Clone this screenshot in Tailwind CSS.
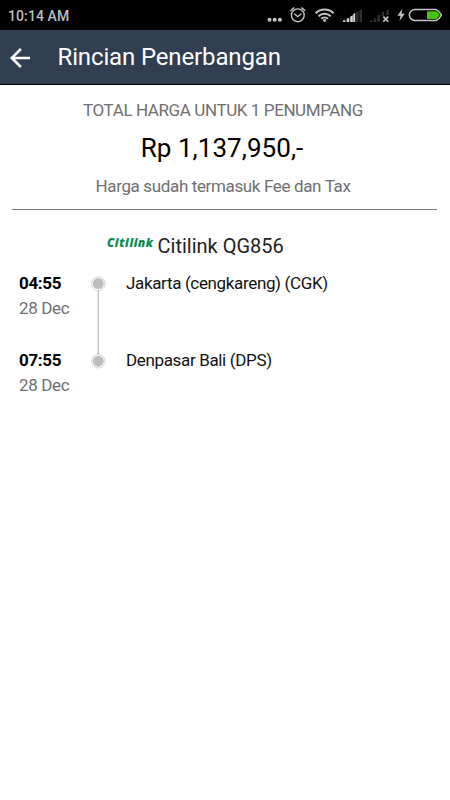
<!DOCTYPE html>
<html lang="id">
<head>
    <meta charset="utf-8"/>
    <meta name="viewport" content="width=device-width, initial-scale=1"/>
    <title>Rincian Penerbangan</title>
    <script src="https://cdn.jsdelivr.net/npm/@tailwindcss/browser@4"></script>
</head>
<body class="bg-white min-h-screen font-['Roboto',sans-serif] whitespace-nowrap">
    <!-- Status bar -->
    <div class="bg-black h-[30px] flex items-center justify-between pl-2 pr-2">
        <div class="text-[#bdbdbd] text-[14px] leading-[30px] font-medium pt-px tracking-[0.1px]">10:14 AM</div>
        <svg class="h-[30px] w-[177px]" viewBox="265 0 177 30" fill="none">
            <g fill="#c4c4c4">
                <circle cx="269.5" cy="19.7" r="2"/>
                <circle cx="274.7" cy="19.7" r="2"/>
                <circle cx="279.9" cy="19.7" r="2"/>
            </g>
            <g stroke="#c4c4c4" stroke-width="1.4" stroke-linecap="round">
                <circle cx="297.8" cy="15.3" r="6.4"/>
                <path d="M294.7 14l3 2.7 3.3-2.7M290.8 10.5l3-2.6M304.8 10.5l-3-2.6"/>
            </g>
            <g stroke="#c4c4c4" stroke-width="2">
                <path d="M315.6 13.2a12.8 12.8 0 0 1 18 0M318.5 16.2a8.6 8.6 0 0 1 12.2 0M321.2 18.8a4.9 4.9 0 0 1 6.8 0"/>
            </g>
            <circle cx="324.6" cy="20.3" r="1.5" fill="#c4c4c4"/>
            <path d="M343 22v-1.5l2.3-.6V22zM346.7 22v-3.3l2.6-1V22zM350.2 22v-5.4l2.6-1.3V22zM353.2 22v-8l2-1V22z" fill="#d4d4d4"/>
            <path d="M356.2 22v-9.8l2.3-1.2V22zM359.5 22V10.5l2.5-1.6V22z" fill="#303030"/>
            <path d="M370 22v-1.5l2.3-.6V22zM373.7 22v-3.3l2.6-1V22zM377.4 22v-6.2l2.5-1.6V22zM381.6 16v-3.4l2.5-1.3V16zM386.3 15v-4.2l2.5-1.6V15z" fill="#303030"/>
            <path d="M383.3 16.6l5 5.2M388.3 16.6l-5 5.2" stroke="#c4c4c4" stroke-width="1.6"/>
            <path d="M402.4 8.8l-5 6.9h3.2l-1.2 5.4 5.4-7.4h-3.4z" fill="#c4c4c4"/>
            <path d="M414.8 9.6h21.4q3.2 1.4 5.2 5.4q-2 4-5.2 5.5h-21.4a5.4 5.4 0 0 1 0-10.9z" stroke="#c4c4c4" stroke-width="1.5" stroke-linejoin="round"/>
            <path d="M427 11.2h9.3q2.3 1.4 3.4 3.8q-1.1 2.6-3.4 3.9H427z" fill="#47c10b"/>
        </svg>
    </div>

    <!-- App bar -->
    <div class="bg-[#2f3e50] h-[55px] border-b border-black flex items-center">
        <svg class="ml-[10px] mt-px w-5 h-5" viewBox="0 0 20 20" fill="none" stroke="#fff" stroke-width="2.6">
            <path d="M20 10H1.8M10.9 1L1.8 10l9.1 9"/>
        </svg>
        <h1 class="ml-[27.5px] text-white text-[24px] leading-[54px] tracking-[-0.14px]">Rincian Penerbangan</h1>
    </div>

    <!-- Price summary -->
    <div class="ml-3 mr-[13px] pt-[14px] pb-[12px] border-b border-[#7c7c7c] text-center text-[#6f6f6f] text-[17px] leading-[22px] tracking-[-0.4px]">
        <div class="mr-[3px]">TOTAL HARGA UNTUK 1 PENUMPANG</div>
        <div class="mr-[5px] my-[11px] text-black text-[26px] leading-[32px] tracking-[0.06px]">Rp 1,137,950,-</div>
        <div class="mr-[3px] tracking-[-0.36px]">Harga sudah termasuk Fee dan Tax</div>
    </div>

    <!-- Airline -->
    <div class="mt-[22px] ml-[107px] flex items-start">
        <div class="w-[50.5px] pt-px text-[#078a50] font-['Open_Sans',sans-serif] text-[11.5px] leading-[20px] font-extrabold italic tracking-[0.6px]">Citilink</div>
        <div class="text-[#222] text-[20px] leading-[28px]">Citilink QG856</div>
    </div>

    <!-- Route -->
    <div class="mt-[11px] ml-[19px] flex text-[17px] leading-[25px] tracking-[-0.35px]">
        <div class="w-[72px]">
            <div class="font-bold">04:55</div>
            <div class="text-[#6f6f6f]">28 Dec</div>
            <div class="mt-[27px] font-bold">07:55</div>
            <div class="text-[#6f6f6f]">28 Dec</div>
        </div>
        <svg class="w-[15px] h-[93px] mt-[5px]" viewBox="0 0 15 93" fill="none">
            <path d="M7.3 14v64" stroke="#bdbdbd" stroke-width="1.3"/>
            <g stroke="#c8c8c8" stroke-width=".8">
                <circle cx="7.3" cy="7.6" r="6.8"/>
                <circle cx="7.3" cy="85.2" r="6.8"/>
            </g>
            <g fill="#bdbdbd">
                <circle cx="7.3" cy="7.6" r="5.5"/>
                <circle cx="7.3" cy="85.2" r="5.5"/>
            </g>
        </svg>
        <div class="ml-5 text-[#111]">
            <div>Jakarta (cengkareng) (CGK)</div>
            <div class="mt-[52px]">Denpasar Bali (DPS)</div>
        </div>
    </div>
</body>
</html>
